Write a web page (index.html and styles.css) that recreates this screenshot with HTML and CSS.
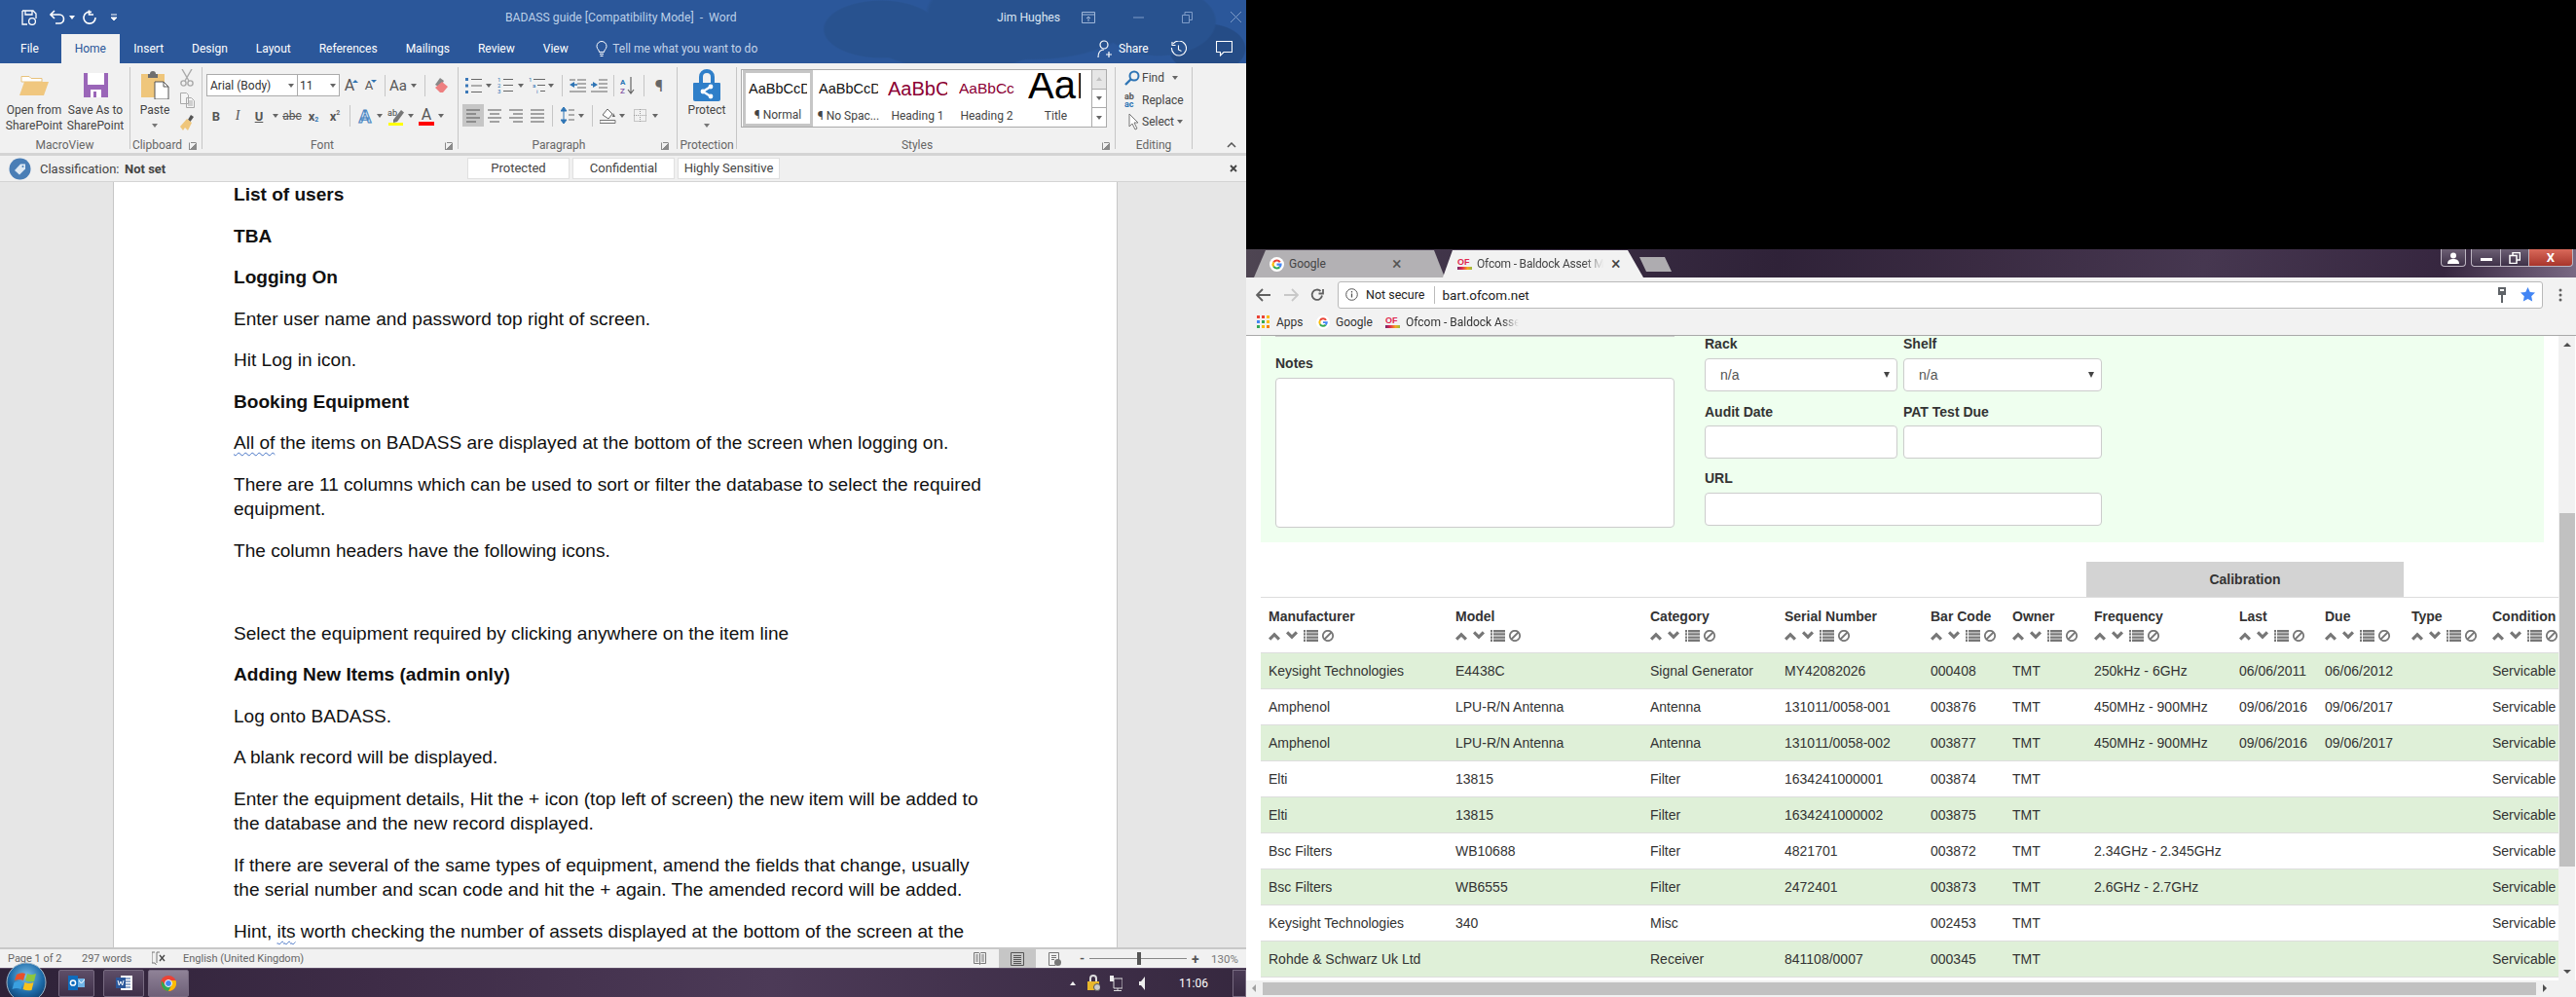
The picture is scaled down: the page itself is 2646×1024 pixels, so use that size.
FILE: index.html
```html
<!DOCTYPE html>
<html lang="en">
<head>
<meta charset="utf-8">
<title>BADASS guide</title>
<link rel="stylesheet" href="styles.css">
</head>
<body>
<svg class="sprite" width="0" height="0" aria-hidden="true">
  <symbol id="sort" viewBox="0 0 68 12">
    <path d="M0 8.500 6 2.500 12 8.500 9.800 10.700 6 6.900 2.200 10.700Z M18 3.500 24 9.500 30 3.500 27.800 1.300 24 5.100 20.200 1.300Z" fill="#777"/>
    <path d="M36 0h2v2.400h-2zM39 0h12v2.400H39zM36 3.200h2v2.400h-2zM39 3.200h12v2.400H39zM36 6.400h2v2.400h-2zM39 6.400h12v2.400H39zM36 9.600h2V12h-2zM39 9.600h12V12H39z" fill="#777"/>
    <circle cx="61" cy="6" r="5.200" fill="none" stroke="#777" stroke-width="1.800"/><path d="M57.500 9.500 64.500 2.500" stroke="#777" stroke-width="1.800"/>
  </symbol>
  <symbol id="glogo" viewBox="0 0 16 16">
    <circle cx="8" cy="8" r="8" fill="#fff"/>
    <path d="M12.500 5A5.300 5.300 0 0 0 3.600 5L5.400 6.500A3 3 0 0 1 10.400 6Z" fill="#ea4335"/>
    <path d="M3.600 5A5.500 5.500 0 0 0 3.600 11L5.400 9.600A3 3 0 0 1 5.400 6.500Z" fill="#fbbc05"/>
    <path d="M3.600 11A5.400 5.400 0 0 0 12 11.600L10.200 10.200A3 3 0 0 1 5.400 9.600Z" fill="#34a853"/>
    <path d="M13.500 7H8V9.200H11A2.600 2.600 0 0 1 10.200 10.200L12 11.600A5.500 5.500 0 0 0 13.500 7Z" fill="#4285f4"/>
  </symbol>
  <symbol id="lines" viewBox="0 0 14 14"><path d="M0 1h14M0 5h14M0 9h14M0 13h14" stroke="#555" stroke-width="1.200"/></symbol>
</svg>

<section class="word">
  <div class="word-head">
    <header class="titlebar">
      <div class="qat">
        <svg class="q1" width="16" height="16" viewBox="0 0 16 16"><path d="M1 1h11l3 3v5M6 15H1V1M4 1v4h7V1" fill="none" stroke="#fff" stroke-width="1.300"/><circle cx="11" cy="12" r="3.400" fill="none" stroke="#fff" stroke-width="1.300"/></svg>
        <svg class="q2" width="16" height="16" viewBox="0 0 16 16"><path d="M5 1 1 5l4 4M1.500 5H10a4.500 4.500 0 0 1 0 9H6" fill="none" stroke="#fff" stroke-width="1.600"/></svg>
        <i class="dd light q3"></i>
        <svg class="q4" width="15" height="16" viewBox="0 0 15 16"><path d="M9 2.500a6 6 0 1 0 4 5.500M6.500 0.500V5H11" fill="none" stroke="#fff" stroke-width="1.600"/></svg>
        <svg class="q5" width="7" height="8" viewBox="0 0 7 8"><path d="M0 1h6M0 4h6l-3 3z" stroke="#fff" fill="#fff"/></svg>
      </div>
      <div class="doc-title">BADASS guide [Compatibility Mode]&nbsp; -&nbsp; Word</div>
      <div class="user">Jim Hughes</div>
      <div class="winctl">
        <svg width="14" height="12" viewBox="0 0 14 12"><path d="M.5.500h13v11H.5zM.5 3h13M7 10V5M5 7l2-2 2 2" fill="none" stroke="#9fb6d8"/></svg>
        <svg width="11" height="2" viewBox="0 0 11 2"><path d="M0 1h11" stroke="#7f9cc8"/></svg>
        <svg width="11" height="12" viewBox="0 0 11 12"><path d="M.5 3.500h7v8h-7zM3 3V.5h7.500v8H8" fill="none" stroke="#7f9cc8"/></svg>
        <svg width="11" height="11" viewBox="0 0 11 11"><path d="M0 0 11 11M11 0 0 11" stroke="#7f9cc8"/></svg>
      </div>
    </header>
    <nav class="tabs">
      <span class="tab first">File</span><span class="tab on">Home</span><span class="tab">Insert</span><span class="tab">Design</span><span class="tab">Layout</span><span class="tab">References</span><span class="tab">Mailings</span><span class="tab">Review</span><span class="tab">View</span>
      <svg class="bulb" width="12" height="17" viewBox="0 0 12 17"><path d="M3.500 11.500C3.500 9 1 8.500 1 5.500a5 5 0 0 1 10 0c0 3-2.500 3.500-2.500 6zM4 13.500h4M4.500 15.500h3" fill="none" stroke="#fff"/></svg>
      <span class="tell">Tell me what you want to do</span>
      <div class="share">
        <svg width="16" height="19" viewBox="0 0 16 19"><circle cx="7" cy="5" r="4" fill="none" stroke="#fff" stroke-width="1.200"/><path d="M1 18c0-5 2-8 6-8M9 15h6M12 12v6" fill="none" stroke="#fff" stroke-width="1.200"/></svg>
        <span>Share</span>
        <svg class="hist" width="17" height="17" viewBox="0 0 17 17"><path d="M3 3a7.500 7.500 0 1 1-1.500 4M2 1v3.500h3.500M8.500 4.500v4.500l3 1.500" fill="none" stroke="#fff" stroke-width="1.100"/></svg>
        <svg class="cmt" width="17" height="16" viewBox="0 0 17 16"><path d="M.5.500h16v11H8l-3.500 3.500V11.500h-4z" fill="none" stroke="#fff" stroke-width="1.100"/></svg>
      </div>
    </nav>
  </div>

  <div class="ribbon">
    <div class="grp g-macro">
      <div class="gbody row">
        <div class="big b-open">
          <div class="bigicon"><svg width="30" height="22" viewBox="0 0 30 22"><path d="M2 4V2.500h8l2 2h11V8H2z" fill="#fff" stroke="#e8c27c"/><path d="M5 8h25l-5 14H0z" fill="#f0c77f"/></svg></div>
          <span>Open from<br>SharePoint</span>
        </div>
        <div class="big b-save">
          <div class="bigicon"><svg width="25" height="25" viewBox="0 0 25 25"><path d="M0 0h25v25H0z" fill="#9a66b8"/><path d="M4 0h17v12H4z" fill="#fff"/><path d="M7 17h11v8H7z" fill="#fff"/><path d="M10 19h3v6h-3z" fill="#9a66b8"/></svg></div>
          <span>Save As to<br>SharePoint</span>
        </div>
      </div>
      <div class="glabel">MacroView</div>
    </div>

    <div class="grp g-clip">
      <div class="gbody row">
        <div class="big b-paste">
          <div class="bigicon"><svg width="29" height="29" viewBox="0 0 29 29"><path d="M0 3h24v24H0z" fill="#efc67b"/><path d="M7 3h2a3 3 0 0 1 6 0h2v4H7z" fill="#6f6f6f"/><path d="M14 11h9l5 5v13H14z" fill="#fff" stroke="#555"/><path d="M23 11v5h5" fill="none" stroke="#555"/></svg></div>
          <span>Paste</span><i class="dd dd-big"></i>
        </div>
        <div class="col-small">
          <div class="sm"><svg width="14" height="18" viewBox="0 0 14 18"><path d="M2 0 9 12M12 0 5 12" stroke="#a9a9a9" stroke-width="1.400"/><circle cx="3.500" cy="14.500" r="2.600" fill="none" stroke="#a9a9a9" stroke-width="1.400"/><circle cx="10.500" cy="14.500" r="2.600" fill="none" stroke="#a9a9a9" stroke-width="1.400"/></svg></div>
          <div class="sm"><svg width="15" height="16" viewBox="0 0 15 16"><path d="M.5.500h6l2 2v9h-8zM6.500 5.500h5l3 3v7h-8z" fill="#f5f5f5" stroke="#a9a9a9"/><path d="M8 9h5M8 11h5M8 13h5" stroke="#a9a9a9"/></svg></div>
          <div class="sm"><svg width="16" height="17" viewBox="0 0 16 17"><path d="M9 6 12 1l3 2-3.500 5z" fill="#555"/><path d="M1 13 8 5l5 4-4 8-3-3-2 3z" fill="#efc67b"/></svg></div>
        </div>
      </div>
      <div class="glabel pr18">Clipboard</div><i class="launch"></i>
    </div>

    <div class="grp g-font">
      <div class="gbody stack">
        <div class="trow r1">
          <div class="combo c-font"><span>Arial (Body)</span><i class="dd"></i></div>
          <div class="combo c-size"><span>11</span><i class="dd"></i></div>
          <span class="t w20 bigA">A<i class="tri up"></i></span>
          <span class="t w20 smA">A<i class="tri down"></i></span>
          <i class="vs ml6"></i>
          <span class="t w26 aa">Aa</span><i class="dd w7"></i>
          <i class="vs ml8"></i>
          <span class="t ml5"><svg width="16" height="18" viewBox="0 0 16 18"><path d="M2 8 7 1l4 3-4 7z" fill="#888"/><path d="M7 16 2 11 9 5l6 5-5 6z" fill="#ee7f80"/></svg></span>
        </div>
        <div class="trow r2 pl3">
          <span class="t b">B</span><span class="t i">I</span><span class="t u">U</span><i class="dd w12"></i>
          <span class="t strike ml1">abc</span><span class="t sub">x<small>2</small></span><span class="t sup">x<small>2</small></span>
          <i class="vs ml4"></i>
          <span class="t ml4 effect">A</span><i class="dd w8"></i>
          <span class="t ml3"><svg width="18" height="19" viewBox="0 0 18 19"><text x="0" y="9" class="svgt">ab</text><path d="M6 13 14 3l3 2.500-7 9.500-4 1z" fill="#777"/><path d="M1 16h15v3H1z" fill="#ffff00"/></svg></span><i class="dd w8"></i>
          <span class="t ml2 fcolor">A<b></b></span><i class="dd w8"></i>
        </div>
      </div>
      <div class="glabel pr16">Font</div><i class="launch"></i>
    </div>

    <div class="grp g-para">
      <div class="gbody stack">
        <div class="trow r1 pl4">
          <span class="t"><svg width="17" height="16" viewBox="0 0 17 16"><path d="M0 0h3v3H0zM0 6.500h3v3H0zM0 13h3v3H0z" fill="#3b78b8"/><path d="M6 1.500h11M6 8h11M6 14.500h11" stroke="#666"/></svg></span><i class="dd w10"></i>
          <span class="t ml2"><svg width="16" height="17" viewBox="0 0 16 17"><text x="0" y="5" class="svgn">1</text><text x="0" y="11" class="svgn">2</text><text x="0" y="17" class="svgn">3</text><path d="M6 2.500h10M6 8.500h10M6 14.500h10" stroke="#666"/></svg></span><i class="dd w10"></i>
          <span class="t ml1"><svg width="17" height="17" viewBox="0 0 17 17"><text x="0" y="5" class="svgn">1</text><text x="4" y="11" class="svgn">a</text><text x="8" y="17" class="svgn">i</text><path d="M5 2.500h12M9 8.500h8M12 14.500h5" stroke="#666"/></svg></span><i class="dd w8"></i>
          <i class="vs ml8"></i>
          <span class="t ml4"><svg width="17" height="14" viewBox="0 0 17 14"><path d="M8 1h9M8 5h9M8 9h9M0 13h17M0 1h6" stroke="#666"/><path d="M0 6 5 3v6z" fill="#2f75b5"/><path d="M3 6h5" stroke="#2f75b5" stroke-width="1.500"/></svg></span>
          <span class="t"><svg width="17" height="14" viewBox="0 0 17 14"><path d="M8 1h9M8 5h9M8 9h9M0 13h17" stroke="#666"/><path d="M7 6 2 3v6z" fill="#2f75b5"/><path d="M0 6h4" stroke="#2f75b5" stroke-width="1.500"/></svg></span>
          <i class="vs ml4"></i>
          <span class="t ml2"><svg width="15" height="18" viewBox="0 0 15 18"><text x="0" y="8" class="svga">A</text><text x="0" y="17" class="svgz">Z</text><path d="M11 0v16M8 13l3 4 3-4" fill="none" stroke="#666" stroke-width="1.200"/></svg></span>
          <i class="vs ml6"></i>
          <span class="t ml4 pil">¶</span>
        </div>
        <div class="trow r2b pl4">
          <span class="t sel"><svg width="14" height="14" viewBox="0 0 14 14"><path d="M0 1h14M0 5h10M0 9h14M0 13h10" stroke="#555" stroke-width="1.200"/></svg></span>
          <span class="t"><svg width="14" height="14" viewBox="0 0 14 14"><path d="M0 1h14M2 5h10M0 9h14M2 13h10" stroke="#555" stroke-width="1.200"/></svg></span>
          <span class="t"><svg width="14" height="14" viewBox="0 0 14 14"><path d="M0 1h14M4 5h10M0 9h14M4 13h10" stroke="#555" stroke-width="1.200"/></svg></span>
          <span class="t"><svg width="14" height="14"><use href="#lines"/></svg></span>
          <i class="vs ml4"></i>
          <span class="t ml4"><svg width="14" height="17" viewBox="0 0 14 17"><path d="M3 0 0 4h6zM3 17 0 13h6zM3 3v11" stroke="#2f75b5" fill="#2f75b5"/><path d="M8 3h6M8 8h6M8 13h6" stroke="#666"/></svg></span><i class="dd w7"></i>
          <i class="vs ml8"></i>
          <span class="t ml4"><svg width="17" height="17" viewBox="0 0 17 17"><path d="M3 8 8 2l5 5-4 5z" fill="#fff" stroke="#666"/><path d="M14 6l2 4h-3z" fill="#666"/><path d="M0 13.500h16v3H0z" fill="#f3f3f3" stroke="#777"/></svg></span><i class="dd w8"></i>
          <span class="t ml4"><svg width="13" height="13" viewBox="0 0 13 13"><path d="M.5.500h12v12H.5zM6.500 0v13M0 6.500h13" fill="none" stroke="#999" stroke-dasharray="1 1"/></svg></span><i class="dd w10"></i>
        </div>
      </div>
      <div class="glabel pr18">Paragraph</div><i class="launch l2"></i>
    </div>

    <div class="grp g-prot">
      <div class="gbody">
        <div class="big b-prot">
          <div class="bigicon"><svg width="28" height="33" viewBox="0 0 28 33"><path d="M6 14V8a8 8 0 0 1 16 0v6h-4V8a4 4 0 0 0-8 0v6z" fill="#2f7fc9"/><path d="M1 14h26a1 1 0 0 1 1 1v16a2 2 0 0 1-2 2H2a2 2 0 0 1-2-2V15a1 1 0 0 1 1-1z" fill="#2f7fc9"/><path d="M18 18 10 23l8 5" fill="none" stroke="#fff" stroke-width="2.400"/><circle cx="18" cy="18" r="2.400" fill="#fff"/><circle cx="10" cy="23" r="2.400" fill="#fff"/><circle cx="18" cy="28" r="2.400" fill="#fff"/></svg></div>
          <span>Protect</span><i class="dd dd-big"></i>
        </div>
      </div>
      <div class="glabel">Protection</div>
    </div>

    <div class="grp g-styles">
      <div class="gbody">
        <div class="gallery">
          <div class="gitem cur"><div class="pv p-n">AaBbCcDd</div><div class="gl">¶ Normal</div></div>
          <div class="gitem"><div class="pv p-n">AaBbCcDd</div><div class="gl">¶ No Spac...</div></div>
          <div class="gitem"><div class="pv p-h1">AaBbCc</div><div class="gl">Heading 1</div></div>
          <div class="gitem"><div class="pv p-h2">AaBbCc</div><div class="gl">Heading 2</div></div>
          <div class="gitem"><div class="pv p-t">AaB</div><div class="gl">Title</div></div>
          <div class="gscroll"><span class="gs g1"><i class="tri gray-up"></i></span><span class="gs"><i class="tri gray-dn"></i></span><span class="gs last"><i class="tri gray-more"></i></span></div>
        </div>
      </div>
      <div class="glabel pr18">Styles</div><i class="launch"></i>
    </div>

    <div class="grp g-edit">
      <div class="gbody edit">
        <div class="er"><svg width="16" height="16" viewBox="0 0 16 16"><circle cx="10" cy="6" r="4.500" fill="none" stroke="#2f75b5" stroke-width="2"/><path d="M7 9 1 15" stroke="#2f75b5" stroke-width="2.400"/></svg><span>Find</span><i class="dd ml8"></i></div>
        <div class="er"><span class="abac"><b>ab</b><b class="ac">ac</b></span><span>Replace</span></div>
        <div class="er"><svg width="16" height="18" viewBox="0 0 16 18"><path d="M5 1v13l3-3 3 6 2-1-3-6h4z" fill="#fff" stroke="#777"/></svg><span>Select</span><i class="dd ml3"></i></div>
      </div>
      <div class="glabel">Editing</div>
    </div>
    <svg class="collapse" width="10" height="6" viewBox="0 0 10 6"><path d="M1 5 5 1l4 4" fill="none" stroke="#555" stroke-width="1.500"/></svg>
  </div>

  <div class="rule"></div>
  <div class="classbar">
    <svg class="tagic" width="23" height="23" viewBox="0 0 23 23"><circle cx="11.500" cy="11.500" r="11" fill="#4a7eb6"/><path d="M6 13 12 6.500h5v5L11 17.500z" fill="#dde8f3"/><circle cx="14.500" cy="9" r="1" fill="#4a7eb6"/></svg>
    <span class="cl">Classification:</span><b class="ns">Not set</b>
    <div class="cbtns"><span class="cbtn">Protected</span><span class="cbtn">Confidential</span><span class="cbtn">Highly Sensitive</span></div>
    <svg class="cx" width="8" height="8" viewBox="0 0 8 8"><path d="M1 1 7 7M7 1 1 7" stroke="#444" stroke-width="1.800"/></svg>
  </div>

  <main class="docarea">
    <article class="page">
      <p class="h">List of users</p>
      <p class="h">TBA</p>
      <p class="h">Logging On</p>
      <p>Enter user name and password top right of screen.</p>
      <p>Hit Log in icon.</p>
      <p class="h">Booking Equipment</p>
      <p><span class="sq">All of</span> the items on BADASS are displayed at the bottom of the screen when logging on.</p>
      <p>There are 11 columns which can be used to sort or filter the database to select the required equipment.</p>
      <p>The column headers have the following icons.</p>
      <p>&nbsp;</p>
      <p>Select the equipment required by clicking anywhere on the item line</p>
      <p class="h">Adding New Items (admin only)</p>
      <p>Log onto BADASS.</p>
      <p>A blank record will be displayed.</p>
      <p>Enter the equipment details, Hit the + icon (top left of screen) the new item will be added to the database and the new record displayed.</p>
      <p>If there are several of the same types of equipment, amend the fields that change, usually the serial number and scan code and hit the + again. The amended record will be added.</p>
      <p>Hint, <span class="sq">its</span> worth checking the number of assets displayed at the bottom of the screen at the end of the process.</p>
    </article>
  </main>

  <footer class="status">
    <span class="s1">Page 1 of 2</span><span class="s2">297 words</span>
    <svg class="s3" width="14" height="15" viewBox="0 0 14 15"><path d="M3 1H0v11h3l1.500 2M8 1h-3v11" fill="none" stroke="#777"/><path d="M8 4l5 6M13 4 8 10" stroke="#444" stroke-width="1.300"/></svg>
    <span class="s4">English (United Kingdom)</span>
    <div class="views">
      <svg width="13" height="14" viewBox="0 0 13 14"><path d="M.5.500h5l1 1 1-1h5v11h-5l-1 1-1-1h-5zM6.500 1.500v11M2 3h3M2 5h3M2 7h3M2 9h3M8 3h3M8 5h3M8 7h3M8 9h3" fill="none" stroke="#777"/></svg>
      <span class="viewon"><svg width="14" height="14" viewBox="0 0 14 14"><path d="M.5.500h13v13H.5zM3 3.500h8M3 5.500h8M3 7.500h8M3 9.500h8M3 11.500h8" fill="none" stroke="#555"/></svg></span>
      <svg width="13" height="14" viewBox="0 0 13 14"><path d="M.5.500h10v8M7 13.500H.5v-13M3 3.500h5M3 5.500h5M3 7.500h3" fill="none" stroke="#777"/><circle cx="9.500" cy="10.500" r="3.500" fill="#777"/></svg>
      <span class="zm">-</span>
      <span class="slider"><i></i></span>
      <span class="zm plus">+</span>
      <span class="pct">130%</span>
    </div>
  </footer>

  <div class="taskbar">
    <svg class="orb" width="42" height="42" viewBox="0 0 42 42">
      <defs><radialGradient id="orbg" cx=".5" cy=".35" r=".7"><stop offset="0" stop-color="#7cc0e8"/><stop offset=".6" stop-color="#1c6aa8"/><stop offset="1" stop-color="#0d3a66"/></radialGradient></defs>
      <circle cx="21" cy="21" r="20" fill="url(#orbg)" stroke="#9fb6c8"/>
      <path d="M11 13q5-3 9-1l-2 7q-4-2-9 0z" fill="#e8502a"/><path d="M22 12q4 2 9 0l-2 8q-5 1-9-1z" fill="#8cc63f"/><path d="M8.500 21q5-2 9 0l-2 7q-4-2-9 0z" fill="#3aa0e0"/><path d="M19.500 21q4 2 9 0l-2 8q-5 1-9-1z" fill="#f8c21c"/>
    </svg>
    <span class="tb tb-o"><svg width="17" height="17" viewBox="0 0 17 17"><path d="M0 1h10v15H0z" fill="#0f6cbd"/><path d="M10 4h7v9h-7z" fill="#6fb3e6"/><circle cx="5" cy="8.500" r="2.600" fill="none" stroke="#fff" stroke-width="1.500"/><path d="M11 6l2.500 3L17 5" fill="none" stroke="#fff"/></svg></span>
    <span class="tb tb-w"><svg width="17" height="17" viewBox="0 0 17 17"><path d="M5 1h12v15H5z" fill="#fff"/><path d="M9 4h6M9 7h6M9 10h6M9 13h6" stroke="#2b579a"/><path d="M0 3h10v11H0z" fill="#2b579a"/><path d="M2 6l1.300 5 1.700-4 1.700 4L8 6" fill="none" stroke="#fff"/></svg></span>
    <span class="tb tb-c"><svg width="16" height="16" viewBox="0 0 16 16"><circle cx="8" cy="8" r="8" fill="#ea4335"/><path d="M1 5.500A8 8 0 0 0 8 16l3-5.500H5.500z" fill="#34a853"/><path d="M8 16A8 8 0 0 0 15.500 5H8l3 5.500z" fill="#fbbc05"/><circle cx="8" cy="8" r="3.500" fill="#4285f4" stroke="#fff"/></svg></span>
    <div class="tray">
      <i class="tri tray-up"></i>
      <svg width="14" height="17" viewBox="0 0 14 17"><path d="M3 7V4a4 4 0 0 1 8 0v3h-2V4a2 2 0 0 0-4 0v3z" fill="#ddd"/><path d="M1 7h12v9H1z" fill="#e8b72c"/><circle cx="11" cy="13" r="3.500" fill="#ccc" stroke="#555"/></svg>
      <svg width="13" height="16" viewBox="0 0 13 16"><path d="M4 3h9v10H4z" fill="none" stroke="#ddd"/><path d="M0 0h4v6H0z" fill="#eee"/><path d="M8 13v2M4 15.500h8" stroke="#ddd"/></svg>
      <svg class="spk" width="6" height="14" viewBox="0 0 6 14"><path d="M0 5h2l4-5v14L2 9H0z" fill="#eee"/></svg>
      <span class="clock">11:06</span>
      <span class="showdesk"></span>
    </div>
  </div>
</section>

<section class="right">
  <div class="black"></div>
  <div class="chrome">
    <div class="tabstrip">
      <div class="ctab c-g"><svg width="15" height="15"><use href="#glogo"/></svg><span>Google</span><b>×</b></div>
      <div class="ctab c-o"><span class="oflogo">OF</span><span class="fade f-tab">Ofcom - Baldock Asset Management</span><b>×</b></div>
      <div class="newtab"></div>
      <div class="caption">
        <span class="cap c-prof"><svg width="12" height="12" viewBox="0 0 12 12"><circle cx="6" cy="3.500" r="3" fill="#fff"/><path d="M0 12c0-4 3-5 6-5s6 1 6 5z" fill="#fff"/></svg></span>
        <span class="cap c-min"><i></i></span>
        <span class="cap c-max"><svg width="12" height="12" viewBox="0 0 12 12"><path d="M1 3.500h7v8H1zM4 3V.5h7.500V8H8.500" fill="none" stroke="#fff" stroke-width="1.500"/></svg></span>
        <span class="cap c-close">X</span>
      </div>
    </div>
    <div class="toolbar">
      <svg width="16" height="14" viewBox="0 0 16 14"><path d="M15 7H2M7 1 1 7l6 6" fill="none" stroke="#606060" stroke-width="1.800"/></svg>
      <svg width="16" height="14" viewBox="0 0 16 14"><path d="M1 7h13M9 1l6 6-6 6" fill="none" stroke="#c8c8c8" stroke-width="1.800"/></svg>
      <svg width="14" height="14" viewBox="0 0 14 14"><path d="M12 7.500A5.200 5.200 0 1 1 10.500 3M13 1v4.500H8.500" fill="none" stroke="#606060" stroke-width="1.800"/></svg>
      <div class="omni">
        <svg width="13" height="13" viewBox="0 0 13 13"><circle cx="6.500" cy="6.500" r="5.800" fill="none" stroke="#555"/><path d="M6.500 5.500v4M6.500 3v1.400" stroke="#555" stroke-width="1.300"/></svg>
        <span class="ns2">Not secure</span><i class="omdiv"></i><span class="url">bart.ofcom.net</span>
        <svg class="key" width="8" height="16" viewBox="0 0 8 16"><path d="M0 0h8v8H5v8H3V8H0z" fill="#5f6368"/><path d="M2 2h4v2H2z" fill="#fff"/></svg>
        <svg class="star" width="15" height="15" viewBox="0 0 15 15"><path d="M7.500 0 9.800 5 15 5.600 11.200 9.200 12.200 14.500 7.500 11.900 2.800 14.500 3.800 9.200 0 5.600 5.200 5z" fill="#4285f4"/></svg>
      </div>
      <svg class="menu" width="4" height="14" viewBox="0 0 4 14"><circle cx="2" cy="2" r="1.500" fill="#606060"/><circle cx="2" cy="7" r="1.500" fill="#606060"/><circle cx="2" cy="12" r="1.500" fill="#606060"/></svg>
    </div>
    <div class="bookmarks">
      <svg width="13" height="13" viewBox="0 0 13 13"><path d="M0 0h3v3H0z" fill="#ea4335"/><path d="M5 0h3v3H5z" fill="#ea4335"/><path d="M10 0h3v3h-3z" fill="#fbbc05"/><path d="M0 5h3v3H0z" fill="#4285f4"/><path d="M5 5h3v3H5z" fill="#34a853"/><path d="M10 5h3v3h-3z" fill="#fbbc05"/><path d="M0 10h3v3H0z" fill="#34a853"/><path d="M5 10h3v3H5z" fill="#fbbc05"/><path d="M10 10h3v3h-3z" fill="#f57c00"/></svg>
      <span class="bm1">Apps</span>
      <svg class="bg" width="14" height="14"><use href="#glogo"/></svg>
      <span class="bm2">Google</span>
      <span class="oflogo ob">OF</span>
      <span class="fade bm3">Ofcom - Baldock Asset</span>
    </div>
    <div class="web">
      <div class="webmain">
        <form class="panel">
          <div class="pleft">
            <div class="prevfield"></div>
            <label class="lab notes-l">Notes</label>
            <textarea class="ta"></textarea>
          </div>
          <div class="pright">
            <div class="f f-a"><label class="lab">Rack</label><div class="sel-w"><select class="inp"><option>n/a</option></select></div></div>
            <div class="f f-a"><label class="lab">Shelf</label><div class="sel-w"><select class="inp"><option>n/a</option></select></div></div>
            <div class="f"><label class="lab">Audit Date</label><input class="inp"></div>
            <div class="f"><label class="lab">PAT Test Due</label><input class="inp"></div>
            <div class="f f-u wide"><label class="lab">URL</label><input class="inp"></div>
          </div>
        </form>
        <table class="assets">
          <colgroup><col class="c1"><col class="c2"><col class="c3"><col class="c4"><col class="c5"><col class="c6"><col class="c7"><col class="c8"><col class="c9"><col class="c10"><col class="c11"></colgroup>
          <thead>
            <tr class="grouprow"><th colspan="6"></th><th colspan="3" class="calib">Calibration</th><th colspan="2"></th></tr>
            <tr class="headrow">
              <th>Manufacturer<svg class="hi"><use href="#sort"/></svg></th>
              <th>Model<svg class="hi"><use href="#sort"/></svg></th>
              <th>Category<svg class="hi"><use href="#sort"/></svg></th>
              <th>Serial Number<svg class="hi"><use href="#sort"/></svg></th>
              <th>Bar Code<svg class="hi"><use href="#sort"/></svg></th>
              <th>Owner<svg class="hi"><use href="#sort"/></svg></th>
              <th>Frequency<svg class="hi"><use href="#sort"/></svg></th>
              <th>Last<svg class="hi"><use href="#sort"/></svg></th>
              <th>Due<svg class="hi"><use href="#sort"/></svg></th>
              <th>Type<svg class="hi"><use href="#sort"/></svg></th>
              <th>Condition<svg class="hi"><use href="#sort"/></svg></th>
            </tr>
          </thead>
          <tbody>
            <tr><td>Keysight Technologies</td><td>E4438C</td><td>Signal Generator</td><td>MY42082026</td><td>000408</td><td>TMT</td><td>250kHz - 6GHz</td><td>06/06/2011</td><td>06/06/2012</td><td></td><td>Servicable</td></tr>
            <tr><td>Amphenol</td><td>LPU-R/N Antenna</td><td>Antenna</td><td>131011/0058-001</td><td>003876</td><td>TMT</td><td>450MHz - 900MHz</td><td>09/06/2016</td><td>09/06/2017</td><td></td><td>Servicable</td></tr>
            <tr><td>Amphenol</td><td>LPU-R/N Antenna</td><td>Antenna</td><td>131011/0058-002</td><td>003877</td><td>TMT</td><td>450MHz - 900MHz</td><td>09/06/2016</td><td>09/06/2017</td><td></td><td>Servicable</td></tr>
            <tr><td>Elti</td><td>13815</td><td>Filter</td><td>1634241000001</td><td>003874</td><td>TMT</td><td></td><td></td><td></td><td></td><td>Servicable</td></tr>
            <tr><td>Elti</td><td>13815</td><td>Filter</td><td>1634241000002</td><td>003875</td><td>TMT</td><td></td><td></td><td></td><td></td><td>Servicable</td></tr>
            <tr><td>Bsc Filters</td><td>WB10688</td><td>Filter</td><td>4821701</td><td>003872</td><td>TMT</td><td>2.34GHz - 2.345GHz</td><td></td><td></td><td></td><td>Servicable</td></tr>
            <tr><td>Bsc Filters</td><td>WB6555</td><td>Filter</td><td>2472401</td><td>003873</td><td>TMT</td><td>2.6GHz - 2.7GHz</td><td></td><td></td><td></td><td>Servicable</td></tr>
            <tr><td>Keysight Technologies</td><td>340</td><td>Misc</td><td></td><td>002453</td><td>TMT</td><td></td><td></td><td></td><td></td><td>Servicable</td></tr>
            <tr><td>Rohde &amp; Schwarz Uk Ltd</td><td></td><td>Receiver</td><td>841108/0007</td><td>000345</td><td>TMT</td><td></td><td></td><td></td><td></td><td>Servicable</td></tr>
          </tbody>
        </table>
      </div>
      <div class="vscroll"><i class="tri sb-up"></i><span class="vthumb"></span><i class="tri sb-dn"></i></div>
    </div>
    <div class="hscroll"><i class="tri sb-l"></i><span class="hthumb"></span><i class="tri sb-r"></i></div>
  </div>
</section>
</body>
</html>
```

FILE: styles.css
```css
*{box-sizing:border-box}
html,body{margin:0;padding:0}
body{width:2646px;height:1024px;display:flex;overflow:hidden;background:#000;font-family:"Liberation Sans",Arial,sans-serif;color:#333}
.sprite{position:absolute}
i{display:block;font-style:normal}

/* ---------- Word ---------- */
.word{width:1280px;height:1024px;display:flex;flex-direction:column;position:relative;font-family:Roboto,"Noto Sans",sans-serif;background:#f1f1f1;flex:none}
.word-head{height:65px;background-color:#2b579a;background-image:
  radial-gradient(ellipse 60px 30px at 905px 30px,#28528f 96%,transparent 100%),
  radial-gradient(ellipse 90px 30px at 985px 42px,#28528f 96%,transparent 100%),
  radial-gradient(ellipse 110px 48px at 1060px 14px,#28528f 96%,transparent 100%),
  radial-gradient(ellipse 60px 36px at 1190px 22px,#28528f 96%,transparent 100%),
  radial-gradient(ellipse 40px 26px at 1240px 50px,#254c86 96%,transparent 100%)}
.titlebar{height:35px;display:flex;align-items:center;color:#fff;position:relative}
.qat{display:flex;align-items:center;padding-left:22px;width:519px}
.q2{margin-left:13px}.q3{margin-left:4px}.q4{margin-left:8px}.q5{margin-left:14px}
.doc-title{width:505px;font-size:12.200px;color:#bcd0e8;white-space:nowrap}
.user{width:87px;font-size:12.200px;color:#dbe5f2;white-space:nowrap}
.winctl{display:flex;align-items:center;gap:39px}
.tabs{height:30px;display:flex;align-items:center;color:#fff;font-size:12px;position:relative}
.tab{padding:0 14.500px;height:30px;line-height:30px;white-space:nowrap}
.tab.first{margin-left:6.500px;padding-right:23px}
.tab.on{background:#f1f1f1;color:#2b579a;padding:0;width:60px;text-align:center}
.bulb{margin-left:14px}
.tell{margin-left:5px;color:#c5d4e8;white-space:nowrap}
.share{margin-left:auto;display:flex;align-items:center;padding-right:14px;color:#fff}
.share span{margin:0 0 0 6px;width:32px}
.hist{margin-left:21px}.cmt{margin-left:30px}

.dd{width:0;height:0;border-left:3.500px solid transparent;border-right:3.500px solid transparent;border-top:4px solid #666;flex:none}
.dd.light{border-top-color:#fff}
.ribbon{height:92px;display:flex;background:#f1f1f1;position:relative;color:#444;font-size:12px}
.grp{position:relative;display:flex;flex-direction:column;height:84px;margin-top:4px;border-right:1px solid #c6c6c6;flex:none}
.g-macro{width:134px}.g-clip{width:74px}.g-font{width:263px}.g-para{width:225px}.g-prot{width:61px}.g-styles{width:389px}.g-edit{width:79px}
.gbody{flex:1;min-height:0}
.row{display:flex}
.stack{display:flex;flex-direction:column}
.glabel{height:16px;line-height:16px;text-align:center;margin-bottom:-4px;color:#666;font-size:12px;white-space:nowrap}
.pr18{padding-right:18px}.pr16{padding-right:16px}
.launch{position:absolute;right:5px;bottom:-1px;width:8px;height:8px;border:1px solid #8a8a8a;border-top-color:transparent;border-right-color:#8a8a8a;background:linear-gradient(135deg,transparent 55%,#8a8a8a 55%)}
.l2{right:8px}
.big{display:flex;flex-direction:column;align-items:center;text-align:center;line-height:16px;white-space:nowrap}
.bigicon{height:36px;display:flex;align-items:center;justify-content:center}
.b-open{width:66px;margin-left:2px}.b-save{width:60px}.b-paste{width:50px}.b-prot{width:60px}
.dd-big{margin-top:6px;border-top-color:#777}
.col-small{width:16px;display:flex;flex-direction:column}
.sm{height:22.500px;display:flex;align-items:center;justify-content:center}
.trow{display:flex;align-items:center;flex:none}
.r1{height:23px;margin-top:7px}
.r2{height:22px;margin-top:9px}
.r2b{height:23px;margin-top:8px}
.pl3{padding-left:3px}.pl4{padding-left:4px}
.g-font .r1{padding-left:4px}
.combo{height:23px;background:#fff;border:1px solid #ababab;display:flex;align-items:center;font-size:12px;color:#333;padding:0 3px;justify-content:space-between}
.c-font{width:94px}.c-size{width:43px;border-left:0;padding-left:2px}
.combo span{white-space:nowrap}
.t{width:22px;height:22px;display:flex;align-items:center;justify-content:center;position:relative;flex:none;font-size:13px;color:#555}
.w20{width:20px}.w26{width:26px}
.w7{margin:0}.w8{margin:0 .500px}.w10{margin:0 1.500px}.w12{margin:0 2.500px}
.ml1{margin-left:1px}.ml2{margin-left:2px}.ml3{margin-left:3px}.ml4{margin-left:4px}.ml5{margin-left:5px}.ml6{margin-left:6px}.ml8{margin-left:8px}
.vs{width:1px;height:22px;background:#c6c6c6;flex:none}
.bigA{font-size:16px}.smA{font-size:13px}
.tri{width:0;height:0;flex:none}
.tri.up{position:absolute;right:1px;top:5px;border:3px solid transparent;border-bottom:3.500px solid #2f75b5;border-top:0}
.tri.down{position:absolute;right:2px;top:5px;border:3px solid transparent;border-top:3.500px solid #2f75b5;border-bottom:0}
.aa{font-size:15px}
.b{font-weight:700;font-size:13px}.i{font-style:italic;font-family:"Liberation Serif",serif;font-size:14px}.u{text-decoration:underline;font-weight:700;font-size:13px}
.strike{text-decoration:line-through;font-size:12px}
.sub,.sup{font-weight:700;font-size:13px}
.sub small{font-size:7px;margin-top:7px;color:#2f75b5}.sup small{font-size:7px;margin-top:-6px;color:#666;align-self:center}
.effect{font-size:19px;color:#cfe2f5;-webkit-text-stroke:1px #4a85c0;font-weight:700}
.svgt{font:9px Roboto,sans-serif;fill:#444}
.svgn{font:6px Roboto,sans-serif;fill:#2f75b5}
.svga{font:700 8px Roboto,sans-serif;fill:#2f75b5}
.svgz{font:700 8px Roboto,sans-serif;fill:#8a5ea8}
.fcolor{font-size:16px;flex-direction:column;line-height:15px}
.fcolor b{display:block;width:16px;height:4px;background:#f00}
.pil{font-size:17px;color:#666}
.sel{background:#c6c6c6;height:23px}
.gallery{display:flex;margin:2px 0 0 4px;width:376px;height:60px;background:#fff;border:1px solid #ababab;padding-left:1px}
.gitem{width:71px;padding-top:3px;text-align:center;flex:none;overflow:hidden}
.gitem.cur{border:3px solid #c6c6c6;padding-top:0;margin-right:1px;width:72px}
.pv{height:32px;line-height:32px;font-family:"Liberation Sans",Arial,sans-serif;white-space:nowrap;overflow:hidden;margin:0 5px;text-align:left}
.p-n{font-size:14.500px;color:#111}
.cur .p-n{margin:0 3px}
.p-h1{font-size:20px;color:#8b0033}
.p-h2{font-size:15.500px;color:#8b0033;margin-left:7px}
.p-t{font-size:40px;color:#000;line-height:24px;height:28px;margin:0 10px 0 7px}
.gl{font-size:12px;color:#444;line-height:20px;white-space:nowrap;margin-top:2px}
.p-t + .gl{margin-top:6px}
.cur .gl{margin-top:1px}
.gscroll{margin-left:auto;width:15px;display:flex;flex-direction:column;border-left:1px solid #ababab;flex:none}
.gs{flex:1;display:flex;align-items:center;justify-content:center;border-bottom:1px solid #ababab;background:#fff}
.gs.g1{background:#e6e6e6}.gs.last{border:0}
.tri.gray-up{border:3.500px solid transparent;border-bottom:4px solid #c0c0c0;border-top:0}
.tri.gray-dn{border:3.500px solid transparent;border-top:4px solid #666;border-bottom:0}
.tri.gray-more{border:3.500px solid transparent;border-top:4px solid #666;border-bottom:0;box-shadow:0 -4px 0 -3px #666}
.edit{padding-left:9px;display:flex;flex-direction:column}
.er{height:22.500px;display:flex;align-items:center;white-space:nowrap;color:#444;font-size:12px}
.er svg{width:16px;flex:none}
.er span{margin-left:2px}
.er .abac{margin:0;width:16px;display:flex;flex-direction:column;font-size:9px;line-height:8px;color:#555}
.abac b{font-weight:700}.abac .ac{color:#2f75b5}
.er .dd{margin-left:8px}.er .ml3{margin-left:3px}
.collapse{position:absolute;left:1260px;top:81px}
.rule{height:3px;background:#d4d4d4}
.classbar{height:27px;background:#f0f0f0;border-bottom:1px solid #d4d4d4;display:flex;align-items:center;font-size:13px;color:#444;position:relative;padding-left:9px}
.tagic{flex:none}
.cl{margin-left:9px;width:87px;white-space:nowrap}
.ns{font-weight:700;width:352px;white-space:nowrap}
.cbtns{display:flex;gap:3px}
.cbtn{width:105px;height:22px;line-height:20px;background:#fff;border:1px solid #e0e0e0;text-align:center;white-space:nowrap}
.cx{margin-left:auto;margin-right:9px}
.docarea{flex:1;min-height:0;background:#e6e6e6;overflow:hidden;padding-left:116px}
.page{width:1032px;height:1200px;background:#fff;border:solid #c6c6c6;border-width:0 1px;padding:0 127px 0 123px;font-family:"Liberation Sans",Arial,sans-serif;font-size:19.070px;line-height:25.500px;color:#111}
.page p{margin:0 0 17px}
.page .h{font-weight:700}
.sq{text-decoration:underline wavy #4472c4 1px;text-underline-offset:3px}
.status{height:21px;background:#f1f1f1;border-top:2px solid #c8c8c8;display:flex;align-items:center;font-size:11px;color:#666;white-space:nowrap}
.s1{margin-left:8px;width:76px}.s2{width:68px}.s3{flex:none;margin-left:4px}.s4{margin-left:18px}
.views{margin-left:auto;display:flex;align-items:center;height:19px;width:280px}
.viewon{width:38px;height:19px;background:#c6c6c6;display:flex;align-items:center;justify-content:center;margin:0 13px}
.zm{margin-left:19px;width:8px;font-weight:700;font-size:13px;color:#555}
.slider{width:100px;height:1px;background:#888;position:relative;margin-left:2px}
.slider i{position:absolute;left:49px;top:-6px;width:4px;height:13px;background:#555}
.plus{margin-left:5px;font-size:14px}
.pct{margin-left:12px;color:#777;font-size:11.500px}
.taskbar{height:30px;background:linear-gradient(90deg,#2e2238 0,#3e2c47 30%,#4c3a57 62%,#3f2f49 85%,#36283f 100%);border-top:1px solid #5b4b66;position:relative;display:flex;align-items:center;padding-left:60px}
.orb{position:absolute;left:6px;top:-7px}
.tb{height:28px;border:1px solid #776a80;border-radius:2px;display:flex;align-items:center;justify-content:center;background:linear-gradient(#5e4e68,#3e2f48)}
.tb-o{width:37px}.tb-w{width:42px;margin-left:9px}.tb-c{width:42px;margin-left:4px;background:linear-gradient(#8f8297,#6e6078)}
.tray{margin-left:auto;display:flex;align-items:center;height:28px;color:#fff}
.tri.tray-up{border:3.500px solid transparent;border-bottom:4px solid #eee;border-top:0;margin-right:11px}
.tray svg{margin-right:10px}
.spk{margin-left:7px}
.clock{margin-left:25px;font-size:12px;width:55px;white-space:nowrap}
.showdesk{width:14px;height:28px;border:1px solid #776a80;background:linear-gradient(#4a3b55,#382a42)}

/* ---------- Right ---------- */
.right{width:1366px;height:1024px;display:flex;flex-direction:column;flex:none}
.black{height:256px;background:#000;flex:none}
.chrome{flex:1;display:flex;flex-direction:column;min-height:0;font-family:Roboto,"Noto Sans",sans-serif}
.tabstrip{height:29px;flex:none;display:flex;align-items:flex-end;padding-left:8px;background:linear-gradient(100deg,#4e4552 0,#3c2f46 20%,#2f2238 40%,#3a2b42 55%,#463750 72%,#36263f 90%,#7a6a84 100%);position:relative;font-size:12px;color:#444}
.ctab{display:flex;align-items:center;height:28px;white-space:nowrap;overflow:hidden}
.ctab b{font-weight:400;font-size:18px;color:#555;line-height:1}
.c-g{width:196px;background:#b3b1b4;clip-path:polygon(12px 0,185px 0,196px 100%,0 100%);padding-left:16px;color:#444}
.c-g span{margin-left:5px;width:103px}.c-g b{margin-left:3px}
.c-o{width:206px;margin-left:-2px;background:#f2f2f2;clip-path:polygon(10px 0,190px 0,206px 100%,0 100%);padding-left:15px}
.oflogo{color:#e0264f;font:700 9px/9px "Liberation Sans",sans-serif;width:15px;flex:none;border-bottom:3px solid;border-image:linear-gradient(90deg,#552a72,#e0264f,#f5a623,#7ec242) 1}
.fade{margin-left:5px;overflow:hidden;white-space:nowrap;-webkit-mask-image:linear-gradient(90deg,#000 85%,transparent);mask-image:linear-gradient(90deg,#000 85%,transparent)}
.f-tab{width:130px;letter-spacing:-.2px}
.c-o b{margin-left:8px;color:#444}
.newtab{width:33px;height:15px;background:#aeacb0;clip-path:polygon(0 0,26px 0,33px 100%,7px 100%);margin:0 0 6px -4px}
.caption{margin-left:auto;align-self:flex-start;display:flex;margin-right:3px}
.cap{height:18px;display:flex;align-items:center;justify-content:center;border:1px solid #bdb6c2;border-top:0;background:linear-gradient(#6c5f74,#3e3148);color:#fff}
.c-prof{width:26px;border-radius:0 0 4px 4px;margin-right:5px}
.c-min{width:30px;border-radius:0 0 0 4px;border-right:0}.c-min i{width:12px;height:3px;background:#fff;margin-top:4px}
.c-max{width:29px;border-right:0}
.c-close{width:46px;border-radius:0 0 4px 0;background:linear-gradient(#d9695a,#a8352b);font-weight:700;font-size:13px}
.toolbar{height:32px;flex:none;background:#f2f2f2;display:flex;align-items:center;padding-left:10px;gap:12px;padding-top:3px}
.omni{width:1238px;height:28px;margin-left:2px;background:#fff;border:1px solid #b9b9b9;border-radius:3px;display:flex;align-items:center;padding-left:7px;font-size:13px;color:#222;white-space:nowrap}
.ns2{margin-left:8px;font-size:12.500px}
.url{font-size:13.500px}
.omdiv{width:1px;height:18px;background:#bbb;margin:0 8px 0 9px}
.key{margin-left:auto;margin-right:15px}
.star{margin-right:7px}
.menu{margin-left:4px}
.bookmarks{height:28px;flex:none;background:#f2f2f2;border-bottom:1px solid #a9a9a9;display:flex;align-items:center;padding-left:11px;font-size:12px;color:#333;white-space:nowrap}
.bm1{margin-left:7px;width:41px}.bm2{margin-left:6px;width:51px}.ob{margin-right:1px}.bm3{width:116px}
.web{flex:1;min-height:0;display:flex;overflow:hidden;background:#fff;font-family:"Liberation Sans",Arial,sans-serif}
.webmain{width:1349px;overflow:hidden;padding-left:15px}
.panel{height:212px;width:1318px;background:#efffef;display:flex;padding-left:15px}
.pleft{width:410px}
.prevfield{height:1px;background:#ccc}
.lab{display:block;font-weight:700;font-size:14px;line-height:16px;color:#333;white-space:nowrap}
.notes-l{margin-top:19px}
.ta{display:block;width:410px;height:154px;margin-top:7px;border:1px solid #ccc;border-radius:4px;background:#fff;resize:none;padding:0}
.pright{margin-left:31px;width:408px;display:grid;grid-template-columns:198px 204px;column-gap:6px;grid-auto-rows:70px;align-content:start}
.wide{grid-column:1 / 3}
.f{display:flex;flex-direction:column}
.f .lab{height:16px;margin-bottom:6px}
.f-a .lab{margin-bottom:7px}
.f-u .lab{margin-top:-2px;margin-bottom:7px}
.inp{display:block;width:100%;height:34px;border:1px solid #ccc;border-radius:4px;background:#fff;padding:0 15px;font:14px "Liberation Sans",Arial,sans-serif;color:#555;appearance:none;-webkit-appearance:none;margin:0}
.sel-w{position:relative}
.sel-w::after{content:"";position:absolute;right:8px;top:14px;border:3px solid transparent;border-top:6px solid #444;border-bottom:0}
.assets{margin-top:20px;width:1357px;table-layout:fixed;border-collapse:separate;border-spacing:0;font-size:14px;color:#333}
.c1{width:192px}.c2{width:200px}.c3{width:138px}.c4{width:150px}.c5{width:84px}.c6{width:84px}.c7{width:149px}.c8{width:88px}.c9{width:89px}.c10{width:83px}.c11{width:100px}
.assets th,.assets td{padding:0 0 0 8px;text-align:left;white-space:nowrap;overflow:hidden}
.grouprow th{height:37px;border-bottom:1px solid #ddd;padding:0}
.assets .calib{background:#d3d3d3;text-align:center;padding:0}
.headrow th{height:57px;border-bottom:1px solid #ddd;vertical-align:top;padding-top:11px;line-height:16px}
.hi{display:block;width:68px;height:12px;margin-top:6px}
.assets td{height:37px;border-bottom:1px solid #ddd}
tbody tr:nth-child(odd) td{background:#dff0d8}
.vscroll{width:17px;background:#f1f1f1;position:relative;margin-left:-1px;flex:none}
.vthumb{position:absolute;left:1px;right:0;top:182px;height:363px;background:#c1c1c1}
.tri.sb-up{position:absolute;left:5px;top:7px;border:4px solid transparent;border-bottom:4px solid #505050;border-top:0}
.tri.sb-dn{position:absolute;left:5px;bottom:7px;border:4px solid transparent;border-top:4px solid #505050;border-bottom:0}
.hscroll{height:17px;flex:none;background:#f1f1f1;position:relative}
.hthumb{position:absolute;left:17px;top:2px;height:13px;width:1308px;background:#c1c1c1}
.tri.sb-l{position:absolute;left:6px;top:4px;border:4px solid transparent;border-right:4px solid #a0a0a0;border-left:0}
.tri.sb-r{position:absolute;left:1332px;top:4px;border:4px solid transparent;border-left:4px solid #505050;border-right:0}
```
